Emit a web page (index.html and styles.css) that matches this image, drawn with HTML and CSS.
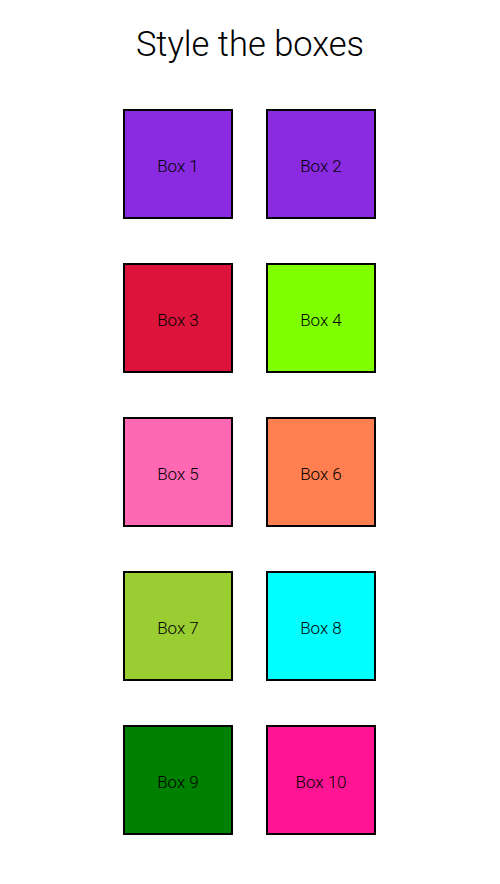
FILE: index.html
```html
<!DOCTYPE html>
<html lang="en">
<head>
  <meta charset="UTF-8">
  <meta name="viewport" content="width=device-width, initial-scale=1.0">
  <title>Style the boxes</title>
  <link rel="stylesheet" href="styles.css">
</head>
<body>
  <h1 class="title">Style the boxes</h1>
  <div class="boxes">
    <div class="box box-1">Box 1</div>
    <div class="box box-2">Box 2</div>
    <div class="box box-3">Box 3</div>
    <div class="box box-4">Box 4</div>
    <div class="box box-5">Box 5</div>
    <div class="box box-6">Box 6</div>
    <div class="box box-7">Box 7</div>
    <div class="box box-8">Box 8</div>
    <div class="box box-9">Box 9</div>
    <div class="box box-10">Box 10</div>
  </div>
</body>
</html>
```

FILE: styles.css
```css
body {
  margin: 0;
  padding: 0;
  background-color: #ffffff;
  color: #000000;
  font-family: Roboto, "Liberation Sans", Arial, sans-serif;
  font-weight: 300;
}
.title {
  margin: 23px 0 0;
  font-size: 34.5px;
  font-weight: 300;
  line-height: 42px;
  text-align: center;
}
.boxes {
  display: grid;
  grid-template-columns: 110px 110px;
  column-gap: 33px;
  row-gap: 44px;
  justify-content: center;
  margin-top: 44px;
  padding-right: 1px;
}
.box {
  box-sizing: border-box;
  width: 110px;
  height: 110px;
  border: 2px solid #000;
  display: flex;
  justify-content: center;
  align-items: center;
  padding-top: 4px;
  font-size: 17px;
}
.box-1, .box-2 { background-color: blueviolet; }
.box-3 { background-color: crimson; }
.box-4 { background-color: chartreuse; }
.box-5 { background-color: hotpink; }
.box-6 { background-color: coral; }
.box-7 { background-color: yellowgreen; }
.box-8 { background-color: cyan; }
.box-9 { background-color: green; }
.box-10 { background-color: deeppink; }
```
